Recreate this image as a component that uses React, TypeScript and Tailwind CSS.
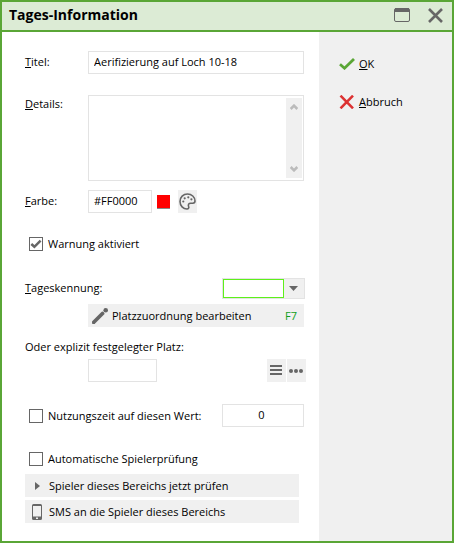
import React, { useState } from 'react';

const field = 'h-[23px] border border-[#e3e3e3] bg-white px-[5px] pb-[2px] outline-none';
const fieldLabel = 'w-[63px] shrink-0 pb-[2px]';
const tool = 'flex h-[23px] w-[19px] shrink-0 items-center justify-center bg-[#f0f0f0]';
const bar = 'flex h-[23px] items-center bg-[#f0f0f0] text-left';

function CheckBox({ checked, onChange, label }: { checked: boolean; onChange: () => void; label: string }) {
  return (
    <label className="flex items-center gap-[5px]">
      <span className="relative flex h-[14px] w-[14px]">
        <input
          type="checkbox"
          checked={checked}
          onChange={onChange}
          className="h-[14px] w-[14px] appearance-none border border-[#666] bg-white"
        />
        {checked && (
          <svg className="pointer-events-none absolute inset-0" width="14" height="14" fill="none" stroke="#666" strokeWidth="2.5">
            <path d="M2.3 7 5.4 9.8 11.6 3.6" />
          </svg>
        )}
      </span>
      {label}
    </label>
  );
}

export default function App() {
  const [title, setTitle] = useState('Aerifizierung auf Loch 10-18');
  const [details, setDetails] = useState('');
  const [color, setColor] = useState('#FF0000');
  const [warning, setWarning] = useState(true);
  const [useTime, setUseTime] = useState(false);
  const [time, setTime] = useState('0');
  const [autoCheck, setAutoCheck] = useState(false);

  return (
    <div className="flex min-h-screen flex-col border-2 border-[#5aa636] bg-white font-['Open_Sans','Noto_Sans',sans-serif] text-[11px] leading-4 text-black">
      <header className="flex h-[30px] items-center border-b-2 border-[#5aa636] bg-[#dcebd5] pr-[9px] pb-[2px] pl-[7px]">
        <h1 className="flex-1 pb-px text-[14px] leading-5 font-bold">Tages-Information</h1>
        <button type="button" aria-label="Maximieren" className="mr-[18px]">
          <svg width="16" height="14" fill="none" stroke="#666">
            <rect x="0.5" y="0.5" width="15" height="13" rx="1.5" />
            <path d="M1 2h14" strokeWidth="4" />
          </svg>
        </button>
        <button type="button" aria-label="Schließen">
          <svg width="15" height="15" fill="none" stroke="#666" strokeWidth="2.6">
            <path d="M1 1 14 14M14 1 1 14" />
          </svg>
        </button>
      </header>

      <div className="flex flex-1">
        <form className="flex min-w-0 flex-1 flex-col pt-[19px] pr-[15px] pb-[18px] pl-[23px]">
          <div className="flex items-center">
            <label htmlFor="titel" className={fieldLabel}><u>T</u>itel:</label>
            <input id="titel" value={title} onChange={(e) => setTitle(e.target.value)} className={`${field} min-w-0 flex-1`} />
          </div>

          <div className="mt-[21px] flex items-start">
            <label htmlFor="details" className={`${fieldLabel} pt-px`}><u>D</u>etails:</label>
            <div className="flex h-[86px] min-w-0 flex-1 border border-[#e3e3e3] p-px">
              <textarea
                id="details"
                value={details}
                onChange={(e) => setDetails(e.target.value)}
                className="min-w-0 flex-1 resize-none px-1 outline-none"
              />
              <div className="my-px flex w-4 flex-col items-center justify-between bg-[#f0f0f0] py-[6px]">
                <svg width="8" height="6" fill="none" stroke="#bbb" strokeWidth="2.6"><path d="M.7 5 4 1.700 7.300 5" /></svg>
                <svg width="8" height="6" fill="none" stroke="#bbb" strokeWidth="2.6"><path d="M.7 1 4 4.300 7.300 1" /></svg>
              </div>
            </div>
          </div>

          <div className="mt-[9px] flex items-center">
            <label htmlFor="farbe" className={fieldLabel}><u>F</u>arbe:</label>
            <input id="farbe" value={color} onChange={(e) => setColor(e.target.value)} className={`${field} w-16`} />
            <span className="ml-[5px] h-[14px] w-[13px] border-b border-[#888]" style={{ backgroundColor: color }} />
            <button type="button" aria-label="Farbe wählen" className={`${tool} ml-2`}>
              <svg width="17" height="17" viewBox="0 0 17 17" fill="none" stroke="#666" strokeWidth="1.6">
                <path d="M8.500 1C4.200 1 1 4.300 1 8.500 1 12.800 4.200 16 8 16c1.600 0 2.200-1.300 1.600-2.600-.7-1.700.1-3.200 2-3.200h2.200c1.400 0 2.200-.8 2.200-2.200C16 4 12.600 1 8.500 1Z" />
                <g fill="#666" stroke="none">
                  <circle cx="4.300" cy="8.500" r="1.100" /><circle cx="5.700" cy="5.300" r="1.100" />
                  <circle cx="9.300" cy="4.300" r="1.100" /><circle cx="12.400" cy="6.300" r="1.100" />
                </g>
              </svg>
            </button>
          </div>

          <div className="mt-[23px] pl-1">
            <CheckBox checked={warning} onChange={() => setWarning(!warning)} label="Warnung aktiviert" />
          </div>

          <div className="mt-[26px] -mr-px flex items-center">
            <label htmlFor="kennung" className="flex-1 pb-[2px]"><u>T</u>ageskennung:</label>
            <div className="relative flex h-[21px] w-[83px] border border-[#e3e3e3] bg-[#f0f0f0]">
              <select id="kennung" className="w-full appearance-none outline-none">
                <option></option>
              </select>
              <span className="pointer-events-none absolute inset-y-0 left-0 w-[61px] border border-[#5ef01a] bg-white" />
              <svg className="pointer-events-none absolute top-[7px] right-[6px]" width="9" height="5" fill="#666">
                <path d="M0 0h9L4.500 5Z" />
              </svg>
            </div>
          </div>

          <button type="button" className={`${bar} mt-[5px] ml-[63px] pr-[7px] pl-1`}>
            <svg width="16" height="16" viewBox="0 0 16 16" fill="none" stroke="#666" strokeLinecap="round">
              <path d="M2 14 10.500 5.500" strokeWidth="3.800" />
              <path d="M1 15h1" strokeWidth="2" />
              <circle cx="13.700" cy="2.300" r="2.300" fill="#666" stroke="none" />
            </svg>
            <span className="ml-1 flex-1">Platzzuordnung bearbeiten</span>
            <span className="text-[#0f9f1a]">F7</span>
          </button>

          <label htmlFor="platz" className="mt-3">Oder explizit festgelegter Platz:</label>
          <div className="mt-1 -mr-[2px] flex pl-[63px]">
            <input id="platz" className={`${field} w-[69px]`} />
            <button type="button" aria-label="Liste" className={`${tool} mr-px ml-auto`}>
              <svg width="13" height="11" fill="#666"><path d="M0 0h12v2H0ZM0 4h12v2H0ZM0 8h12v2H0Z" /></svg>
            </button>
            <button type="button" aria-label="Mehr" className={tool}>
              <svg width="15" height="4" fill="#666"><circle cx="2" cy="2" r="2" /><circle cx="7" cy="2" r="2" /><circle cx="12" cy="2" r="2" /></svg>
            </button>
          </div>

          <div className="mt-[22px] flex items-center justify-between pl-1">
            <CheckBox checked={useTime} onChange={() => setUseTime(!useTime)} label="Nutzungszeit auf diesen Wert:" />
            <input
              aria-label="Nutzungszeit"
              value={time}
              onChange={(e) => setTime(e.target.value)}
              className={`${field} w-[82px] pr-2 text-center`}
            />
          </div>

          <div className="mt-6 pl-1">
            <CheckBox checked={autoCheck} onChange={() => setAutoCheck(!autoCheck)} label="Automatische Spielerprüfung" />
          </div>

          <button type="button" className={`${bar} mt-[7px] mr-[5px]`}>
            <span className="flex w-6 justify-center">
              <svg width="5" height="8" fill="#666"><path d="M0 0 5 4 0 8Z" /></svg>
            </span>
            Spieler dieses Bereichs jetzt prüfen
          </button>
          <button type="button" className={`${bar} mt-[3px] mr-[5px]`}>
            <span className="flex w-6 justify-center">
              <svg width="10" height="16" fill="#666">
                <path fillRule="evenodd" d="M1.500 0h7A1.500 1.500 0 0 1 10 1.500v13A1.500 1.500 0 0 1 8.500 16h-7A1.500 1.500 0 0 1 0 14.500v-13A1.500 1.500 0 0 1 1.500 0ZM1 2v10.500h8V2ZM4 13.500v1.500h2v-1.500Z" />
              </svg>
            </span>
            SMS an die Spieler dieses Bereichs
          </button>
        </form>

        <aside className="flex w-[133px] shrink-0 flex-col items-start gap-[22px] bg-[#f0f0f0] pt-6 pl-5">
          <button type="button" className="flex items-center gap-1">
            <svg width="16" height="12" fill="none" stroke="#5aa636" strokeWidth="2.8"><path d="M1 6.300 5.500 10.200 15 1" /></svg>
            <span><u>O</u>K</span>
          </button>
          <button type="button" className="flex items-center gap-1">
            <svg width="16" height="14" fill="none" stroke="#dc3232" strokeWidth="2.6"><path d="M1.500 .7 14 13.300M14 .7 1.500 13.300" /></svg>
            <span><u>A</u>bbruch</span>
          </button>
        </aside>
      </div>
    </div>
  );
}
